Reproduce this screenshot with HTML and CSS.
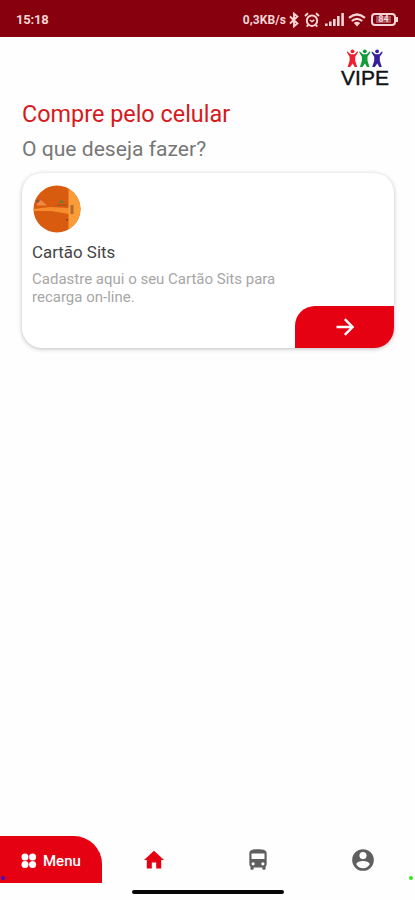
FILE: index.html
```html
<!DOCTYPE html>
<html lang="pt-BR">
<head>
    <meta charset="UTF-8">
    <meta name="viewport" content="width=device-width, initial-scale=1.0">
    <title>VIPE - Compre pelo celular</title>
    <link rel="stylesheet" href="styles.css">
</head>
<body>

    <div class="status-bar">
        <span class="time">15:18</span>
        <div class="status-icons">
            <span class="speed">0,3KB/s</span>
            <svg class="bluetooth" width="10" height="16" viewBox="0 0 10 16">
                <path d="M1 4.5l7.4 7L5 14.3V1.700l3.400 2.800-7.400 7" fill="none" stroke="currentColor" stroke-width="1.9"/>
            </svg>
            <svg class="alarm" width="16" height="16" viewBox="0 0 16 16" fill="none" stroke="currentColor" stroke-width="2">
                <circle cx="8" cy="8.7" r="5.2"/>
                <path d="M1 4l3-2.7M15 4l-3-2.7M4 13l-1.2 1.6M12 13l1.2 1.6"/>
                <path d="M5.800 8l2.200 1.500L10.300 8" stroke-width="1.500"/>
            </svg>
            <svg class="signal" width="19" height="13" viewBox="0 0 19 13" fill="currentColor">
                <path d="M0 10.500h2.600V13H0zM4 8.500h2.600V13H4zM8 6h2.600v7H8zM12 3h2.600v10H12zM16.300 0h2.600v13h-2.600z"/>
            </svg>
            <svg class="wifi" width="18" height="14" viewBox="0 0 18 14" fill="none" stroke="currentColor" stroke-width="2.2">
                <path d="M1 4.8Q9-1.8 17 4.8M3.8 8Q9 3.600 14.2 8"/>
                <path d="M5.8 10Q9 7.400 12.2 10L9 13.4z" fill="currentColor" stroke="none"/>
            </svg>
            <div class="battery"><span>84</span></div>
        </div>
    </div>

    <div class="header">
        <div class="logo">
            <svg width="36" height="20" viewBox="0 0 36 20">
                <g fill="#ee2030">
                    <circle cx="5.5" cy="2.3" r="1.900"/>
                    <path d="M.2 2.200l3.500 3h3.800l3-3 .5 1.200-2.800 4.300v4l2 6.300H7.700l-2-3.600L3.200 18H.6l2-6.300v-4L0 3.400z"/>
                </g>
                <g fill="#159c3a">
                    <circle cx="17.800" cy="2.300" r="1.900"/>
                    <path d="M12.500 2.200l3.500 3h3.800l3-3 .5 1.200-2.800 4.300v4l2 6.300H20l-2-3.600-2.500 3.600h-2.600l2-6.300v-4l-2.600-4.300z"/>
                </g>
                <g fill="#33209a">
                    <circle cx="30.100" cy="2.300" r="1.900"/>
                    <path d="M24.800 2.200l3.500 3h3.800l3-3 .5 1.200-2.800 4.300v4l2 6.300h-2.500l-2-3.600-2.500 3.600h-2.600l2-6.300v-4l-2.600-4.300z"/>
                </g>
            </svg>
            <span>VIPE</span>
        </div>
    </div>

    <main>
        <h1>Compre pelo celular</h1>
        <h2>O que deseja fazer?</h2>

        <div class="card">
            <svg class="card-image" width="48" height="48" viewBox="0 0 48 48">
                <defs>
                    <clipPath id="round"><circle cx="24" cy="24" r="23.5"/></clipPath>
                </defs>
                <g clip-path="url(#round)">
                    <rect width="48" height="48" fill="#d95b10"/>
                    <path d="M0 24l17-2 19 1v6L18 26 0 26z" fill="#f58b2c"/>
                    <path d="M4 19l4-4 6 5.500H4z" fill="#ef8a45"/>
                    <path d="M24 19.500h10V21H24z" fill="#a8541c"/>
                    <rect x="35.500" width="13" height="48" fill="#fa9c38"/>
                    <path d="M3 16l2-2 1 2-2 2z" fill="#75574e"/>
                    <path d="M26 18l2.500-4 2.500 4z" fill="#6d7a38"/>
                    <path d="M37.500 20h3v9h-3z" fill="#b06a29"/>
                    <path d="M33 34h2v1.500h-2z" fill="#7f421b"/>
                </g>
            </svg>
            <h3>Cartão Sits</h3>
            <p>Cadastre aqui o seu Cartão Sits para<br>recarga on-line.</p>
            <button class="go" aria-label="Abrir">
                <svg width="20" height="20" viewBox="0 0 20 20" fill="none" stroke="#fff" stroke-width="2.4">
                    <path d="M1.500 10h16M9.800 2.200l7.800 7.800-7.800 7.800"/>
                </svg>
            </button>
        </div>
    </main>

    <nav>
        <button class="menu">
            <svg width="16" height="16" viewBox="0 0 16 16" fill="#fff">
                <circle cx="4" cy="4" r="3.5"/>
                <circle cx="11.6" cy="4" r="3.5"/>
                <circle cx="4" cy="11.6" r="3.5"/>
                <circle cx="11.6" cy="11.6" r="3.5"/>
            </svg>
            <span>Menu</span>
        </button>
        <div class="tabs">
            <svg class="active" width="24" height="24" viewBox="0 0 24 24" fill="currentColor">
                <path d="M9.800 20.500v-6h4.400v6h5V12H22L12 2.800 2 12h2.800v8.500z"/>
            </svg>
            <svg width="26" height="26" viewBox="0 0 24 24" fill="currentColor">
                <path d="M18 11H6V6h12m-1.500 11a1.500 1.500 0 1 1 0-3 1.500 1.500 0 0 1 0 3m-9 0a1.500 1.500 0 1 1 0-3 1.500 1.500 0 0 1 0 3M4 16c0 .88.39 1.670 1 2.220V20a1 1 0 0 0 1 1h1a1 1 0 0 0 1-1v-1h8v1a1 1 0 0 0 1 1h1a1 1 0 0 0 1-1v-1.780c.61-.55 1-1.340 1-2.220V6c0-3.500-3.580-4-8-4s-8 .5-8 4z"/>
            </svg>
            <svg width="26" height="26" viewBox="0 0 24 24" fill="currentColor">
                <path fill-rule="evenodd" d="M12 2a10 10 0 1 0 0 20 10 10 0 0 0 0-20zm0 2.600a3.300 3.300 0 1 1 0 6.600 3.300 3.300 0 0 1 0-6.600zm0 15a7.200 7.200 0 0 1-6.200-3.600c.03-1.990 4-3.080 6.200-3.080s6.170 1.090 6.200 3.080a7.200 7.200 0 0 1-6.200 3.600z"/>
            </svg>
        </div>
        <i class="dot blue"></i>
        <i class="dot green"></i>
    </nav>
    <div class="home-line"></div>

</body>
</html>
```
FILE: styles.css
```css
* {
    box-sizing: border-box;
}
body {
    margin: 0;
    height: 900px;
    display: flex;
    flex-direction: column;
    background-color: #fefefe;
    font-family: Roboto, sans-serif;
    overflow: hidden;
}
h1, h2, h3, p {
    margin: 0;
    font-weight: 400;
}
button {
    border: none;
    padding: 0;
    font-family: inherit;
    color: white;
    background-color: #e50012;
}

/* Status bar */
.status-bar {
    height: 37px;
    flex: none;
    display: flex;
    justify-content: space-between;
    align-items: center;
    padding: 2px 17px 0 16px;
    background-color: #87000d;
    color: #f5d5d5;
}
.time {
    font-size: 13px;
    font-weight: 700;
    letter-spacing: -0.2px;
}
.status-icons {
    display: flex;
    align-items: center;
}
.speed {
    font-size: 12px;
    font-weight: 700;
    letter-spacing: 0.1px;
}
.bluetooth {
    margin-left: 3px;
}
.alarm {
    margin-left: 5px;
}
.signal {
    margin-left: 5px;
}
.wifi {
    margin-left: 4px;
}
.battery {
    position: relative;
    display: flex;
    justify-content: center;
    align-items: center;
    width: 25px;
    height: 13px;
    margin: 0 2px 0 5px;
    border: 2px solid #f5d5d5;
    border-radius: 4px;
    font-size: 9px;
    font-weight: 700;
}
.battery span {
    padding: 0 2px;
    line-height: 7px;
    background-color: #a8505c;
}
.battery::after {
    content: "";
    position: absolute;
    right: -4px;
    top: 2px;
    width: 2px;
    height: 5px;
    background-color: #f5d5d5;
}

/* Logo */
.header {
    height: 62px;
    flex: none;
    display: flex;
    justify-content: flex-end;
    padding: 12px 25px 0 0;
}
.logo {
    width: 50px;
    display: flex;
    flex-direction: column;
    align-items: center;
}
.logo svg {
    margin-right: 1px;
}
.logo span {
    font-family: "Liberation Sans", Arial, sans-serif;
    font-size: 21px;
    line-height: 18px;
    color: #111;
    -webkit-text-stroke: 0.4px #111;
}

main {
    flex: 1;
    padding: 0 21px 0 22px;
}
h1 {
    font-size: 23.4px;
    line-height: 30px;
    color: #d71920;
}
h2 {
    margin-top: 5px;
    font-size: 21.1px;
    line-height: 30px;
    color: #777;
}

/* Card */
.card {
    position: relative;
    height: 175px;
    margin-top: 9px;
    padding: 12px 10px;
    border-radius: 20px;
    background-color: white;
    box-shadow: 0 1px 4px rgba(0, 0, 0, 0.26);
}
.card-image {
    display: block;
    margin-left: 1px;
}
h3 {
    margin-top: 9px;
    font-size: 16.9px;
    line-height: 20px;
    color: #444;
}
.card p {
    margin-top: 9px;
    font-size: 15px;
    line-height: 17.5px;
    color: #a6a6a6;
}
.go {
    position: absolute;
    right: 0;
    bottom: 0;
    width: 99px;
    height: 42px;
    display: flex;
    justify-content: center;
    align-items: center;
    border-radius: 20px 0 20px 0;
}

/* Bottom navigation */
nav {
    position: relative;
    height: 47px;
    flex: none;
    display: flex;
}
.menu {
    width: 102px;
    display: flex;
    align-items: center;
    gap: 6px;
    padding: 2px 0 0 21px;
    border-radius: 0 28px 0 0;
    font-size: 15px;
    font-weight: 500;
}
.tabs {
    flex: 1;
    display: flex;
    justify-content: space-between;
    align-items: center;
    padding: 0 39px 0 40px;
    color: #5f5f5f;
}
.active {
    color: #e50012;
}
.dot {
    position: absolute;
    top: 40px;
    width: 4px;
    height: 4px;
    border-radius: 50%;
}
.blue {
    left: 1px;
    background-color: #3a10c8;
}
.green {
    right: 2px;
    background-color: #35e81c;
}
.home-line {
    width: 152px;
    height: 4px;
    flex: none;
    margin: 7px 0 6px 132px;
    border-radius: 2px;
    background-color: #080808;
}
```
